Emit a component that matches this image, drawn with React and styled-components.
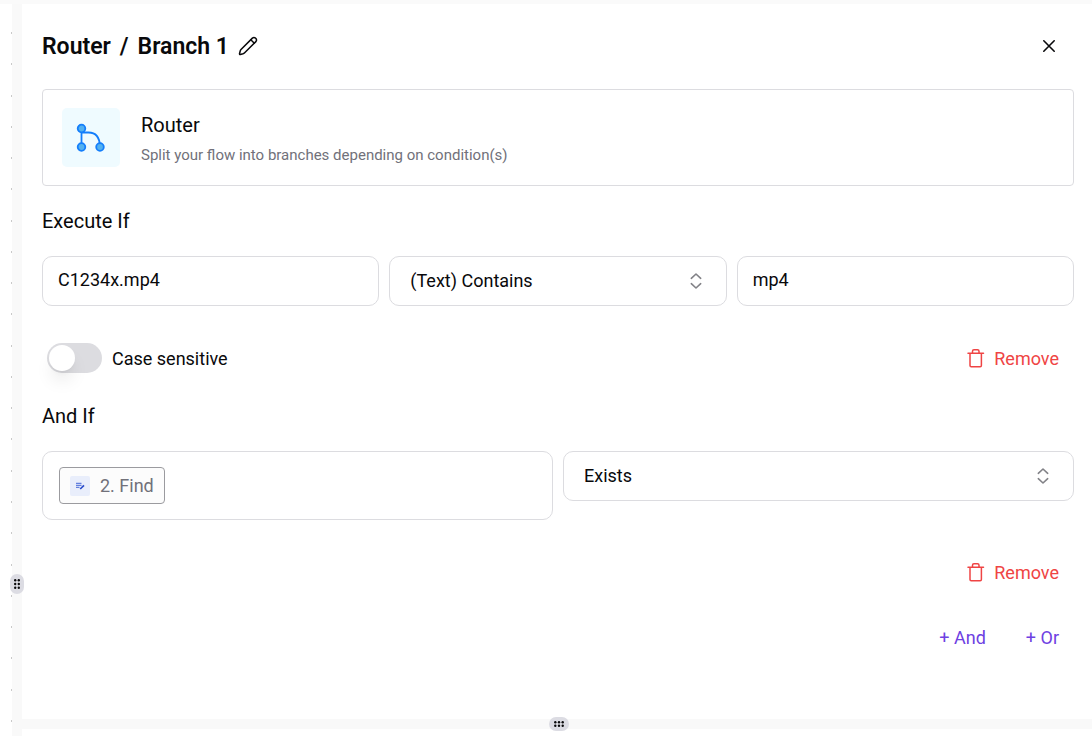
import React from "react";
import styled, { createGlobalStyle } from "styled-components";

const Global = createGlobalStyle`
  *, *::before, *::after { box-sizing: border-box; }
  body { margin: 0; background: #fff; color: #09090b; font-family: Roboto, sans-serif; font-size: 18px; line-height: 26px; }
  button, input, select { font: inherit; color: inherit; }
  h1, h2, h3, p { margin: 0; font-weight: 400; }
`;

const Page = styled.div`
  display: flex;
  min-height: 100vh;
  border-top: 4px solid #fafafa;
`;
const Canvas = styled.div`
  flex: 0 0 12px;
  display: flex;
  flex-direction: column;
  justify-content: space-between;
  align-items: flex-end;
  padding: 28px 0 14px;
`;
const Dot = styled.i`
  width: 1px;
  height: 2px;
  background: #c9c9c9;
`;
const Divider = styled.div`
  position: relative;
  flex: 0 0 10px;
  background: #f9f9f9;
`;
const Grip = styled.button`
  position: absolute;
  display: flex;
  align-items: center;
  justify-content: center;
  padding: 0;
  border: 0;
  border-radius: 7px;
  background: #dcdce3;
  width: ${(p) => (p.$flat ? 20 : 14)}px;
  height: ${(p) => (p.$flat ? 14 : 20)}px;
  left: ${(p) => (p.$flat ? "50%" : "-2px")};
  top: ${(p) => (p.$flat ? "-2px" : "570px")};
  margin-left: ${(p) => (p.$flat ? -8 : 0)}px;
`;
const Column = styled.div`
  flex: 1;
  min-width: 0;
  display: flex;
  flex-direction: column;
  padding-bottom: 7px;
`;
const Panel = styled.main`
  flex: 1;
  padding: 20px 18px 0 20px;
`;
const Header = styled.header`
  display: flex;
  align-items: center;
  justify-content: space-between;
  height: 44px;
  padding-right: 14px;
`;
const Title = styled.h1`
  display: flex;
  align-items: center;
  gap: 9px;
  font-size: 23px;
  line-height: 33px;
  font-weight: 600;
`;
const IconButton = styled.button`
  display: flex;
  padding: 0;
  border: 0;
  background: none;
  cursor: pointer;
`;
const Card = styled.section`
  display: flex;
  align-items: flex-start;
  gap: 21px;
  margin-top: 21px;
  padding: 18px 19px 17px;
  border: 1px solid #dcdce0;
  border-radius: 4px;
`;
const Logo = styled.div`
  display: flex;
  align-items: center;
  justify-content: center;
  width: 58px;
  height: 59px;
  border-radius: 5px;
  background: #effbff;
`;
const CardTitle = styled.h2`
  font-size: 20px;
  line-height: 34px;
`;
const CardText = styled.p`
  font-size: 15px;
  line-height: 26px;
  color: #71717a;
`;
const SectionTitle = styled.h3`
  margin-top: ${(p) => p.$gap}px;
  font-size: 20px;
  line-height: 30px;
`;
const Fields = styled.div`
  display: grid;
  grid-template-columns: repeat(${(p) => p.$count}, minmax(0, 1fr));
  gap: 10px;
  margin-top: 20px;
  align-items: start;
`;
const TextInput = styled.input`
  width: 100%;
  height: 50px;
  padding: 0 15px 4px;
  border: 1px solid #dcdce0;
  border-radius: 10px;
  background: #fff;
`;
const SelectBox = styled.div`
  display: grid;
  align-items: center;
  & > * { grid-area: 1 / 1; }
  & > svg { justify-self: end; margin-right: 20px; pointer-events: none; }
`;
const Select = styled.select`
  appearance: none;
  width: 100%;
  height: 50px;
  padding: 0 20px;
  border: 1px solid #dcdce0;
  border-radius: 10px;
  background: #fff;
`;
const Mention = styled.div`
  display: flex;
  padding: 15px 16px;
  border: 1px solid #dcdce0;
  border-radius: 10px;
`;
const Chip = styled.span`
  display: flex;
  align-items: center;
  gap: 10px;
  height: 37px;
  padding: 0 10px;
  border: 1px solid #9b9b9f;
  border-radius: 4px;
  background: #fcfcfc;
  color: #71717a;
`;
const ChipIcon = styled.span`
  display: flex;
  width: 20px;
  height: 20px;
  border-radius: 2px;
  background: #e9eefb;
`;
const Row = styled.div`
  display: flex;
  align-items: center;
  justify-content: ${(p) => (p.$end ? "flex-end" : "space-between")};
  gap: 40px;
  height: 30px;
  margin-top: ${(p) => p.$gap}px;
  padding: 0 15px 0 5px;
`;
const SwitchLabel = styled.label`
  display: flex;
  align-items: center;
  gap: 10px;
`;
const SwitchText = styled.span`
  padding-top: 2px;
`;
const Switch = styled.input`
  appearance: none;
  display: flex;
  width: 55px;
  height: 30px;
  margin: 0;
  padding: 2px;
  border-radius: 15px;
  background: #dcdce0;
  &::before {
    content: "";
    width: 26px;
    height: 26px;
    border-radius: 50%;
    background: #fff;
    box-shadow: 0 12px 18px -3px rgba(0, 0, 0, 0.1), 0 4px 6px -4px rgba(0, 0, 0, 0.1);
  }
  &:checked { background: #6e41e2; justify-content: flex-end; }
`;
const ActionButton = styled.button`
  display: flex;
  align-items: center;
  gap: 9px;
  padding: 2px 0 0;
  border: 0;
  background: none;
  cursor: pointer;
  color: ${(p) => (p.$danger ? "#ef4444" : "#6e41e2")};
`;
const BottomBar = styled.div`
  position: relative;
  height: 10px;
  background: #f9f9f9;
`;

const GripDots = ({ flat }) => (
  <svg width={flat ? 12 : 8} height={flat ? 8 : 12} viewBox={flat ? "0 0 12 8" : "0 0 8 12"} fill="#09090b">
    {[2.3, 6, 9.7].map((a) =>
      [2.2, 5.8].map((b) => <circle key={`${a}-${b}`} cx={flat ? a : b} cy={flat ? b : a} r="1.2" />)
    )}
  </svg>
);
const PencilIcon = () => (
  <svg width="20" height="20" viewBox="0 0 20 20" fill="none" stroke="#09090b" strokeWidth="1.5" strokeLinecap="round" strokeLinejoin="round">
    <path d="M14.4 2.100a2.500 2.500 0 0 1 3.500 3.500L6.400 17Q5.900 17.500 5 17.800L2.300 18.500Q1.400 18.600 1.500 17.700L2.200 15Q2.500 14 3 13.500Z" />
    <path d="m12.800 3.700 3.500 3.500" />
  </svg>
);
const CloseIcon = () => (
  <svg width="22" height="22" viewBox="0 0 22 22" fill="none" stroke="#09090b" strokeWidth="1.6" strokeLinecap="round">
    <path d="M5.800 5.800l10.400 10.400M16.200 5.800 5.800 16.200" />
  </svg>
);
const RouterIcon = () => (
  <svg width="30" height="30" viewBox="0 0 30 30" fill="none" stroke="#147efb" strokeWidth="1.8">
    <path d="M5.500 6v18M5.500 9.500h7q11 0 11.500 14" />
    <g fill="#53b1ef">
      <circle cx="5.500" cy="5.500" r="3.800" />
      <circle cx="5.500" cy="24" r="3.800" />
      <circle cx="24" cy="24" r="3.800" />
    </g>
  </svg>
);
const SortIcon = () => (
  <svg width="22" height="22" viewBox="0 0 22 22" fill="none" stroke="#828287" strokeWidth="1.6" strokeLinecap="round" strokeLinejoin="round">
    <path d="M6.300 8.300 11 4l4.700 4.300M6.300 13.700 11 18l4.700-4.300" />
  </svg>
);
const TrashIcon = () => (
  <svg width="20" height="22" viewBox="0 0 20 22" fill="none" stroke="currentColor" strokeWidth="1.5" strokeLinecap="round" strokeLinejoin="round">
    <path d="M3 5.200h15.500M5 5.200V17.500q0 1.200 1.200 1.200h9q1.200 0 1.200-1.200V5.200M7.500 5V3.300q0-1.500 1.500-1.500h3.500q1.500 0 1.500 1.500V5" />
  </svg>
);
const NoteIcon = () => (
  <svg width="20" height="20" viewBox="0 0 20 20" fill="none" stroke="#4364d8">
    <path d="M6 7.300h5.500M6 9.300h5.500M6 11.300h3.500" strokeWidth="1" />
    <path d="M10.200 13 14 9.400" strokeWidth="1.700" stroke="#294bcb" />
  </svg>
);

const Remove = () => (
  <ActionButton type="button" $danger>
    <TrashIcon />
    Remove
  </ActionButton>
);
const Operator = ({ label, value }) => (
  <SelectBox>
    <Select aria-label={label} defaultValue={value}>
      <option>(Text) Contains</option>
      <option>Exists</option>
    </Select>
    <SortIcon />
  </SelectBox>
);

export default function App() {
  return (
    <>
      <Global />
      <Page>
        <Canvas>
          {Array.from({ length: 23 }, (_, i) => (
            <Dot key={i} />
          ))}
        </Canvas>
        <Divider>
          <Grip type="button" aria-label="Resize sidebar">
            <GripDots />
          </Grip>
        </Divider>
        <Column>
          <Panel>
            <Header>
              <Title>
                <span>Router</span>
                <span>/</span>
                <span>Branch 1</span>
                <IconButton type="button" aria-label="Rename branch">
                  <PencilIcon />
                </IconButton>
              </Title>
              <IconButton type="button" aria-label="Close">
                <CloseIcon />
              </IconButton>
            </Header>
            <Card>
              <Logo>
                <RouterIcon />
              </Logo>
              <div>
                <CardTitle>Router</CardTitle>
                <CardText>Split your flow into branches depending on condition(s)</CardText>
              </div>
            </Card>
            <SectionTitle $gap={20}>Execute If</SectionTitle>
            <Fields $count={3}>
              <TextInput aria-label="First value" defaultValue="C1234x.mp4" />
              <Operator label="Condition" value="(Text) Contains" />
              <TextInput aria-label="Second value" defaultValue="mp4" />
            </Fields>
            <Row $gap={37}>
              <SwitchLabel>
                <Switch type="checkbox" role="switch" />
                <SwitchText>Case sensitive</SwitchText>
              </SwitchLabel>
              <Remove />
            </Row>
            <SectionTitle $gap={28}>And If</SectionTitle>
            <Fields $count={2}>
              <Mention>
                <Chip>
                  <ChipIcon>
                    <NoteIcon />
                  </ChipIcon>
                  2. Find
                </Chip>
              </Mention>
              <Operator label="Second condition" value="Exists" />
            </Fields>
            <Row $gap={37} $end>
              <Remove />
            </Row>
            <Row $gap={35} $end>
              <ActionButton type="button">+ And</ActionButton>
              <ActionButton type="button">+ Or</ActionButton>
            </Row>
          </Panel>
          <BottomBar>
            <Grip type="button" aria-label="Resize bottom panel" $flat>
              <GripDots flat />
            </Grip>
          </BottomBar>
        </Column>
      </Page>
    </>
  );
}
